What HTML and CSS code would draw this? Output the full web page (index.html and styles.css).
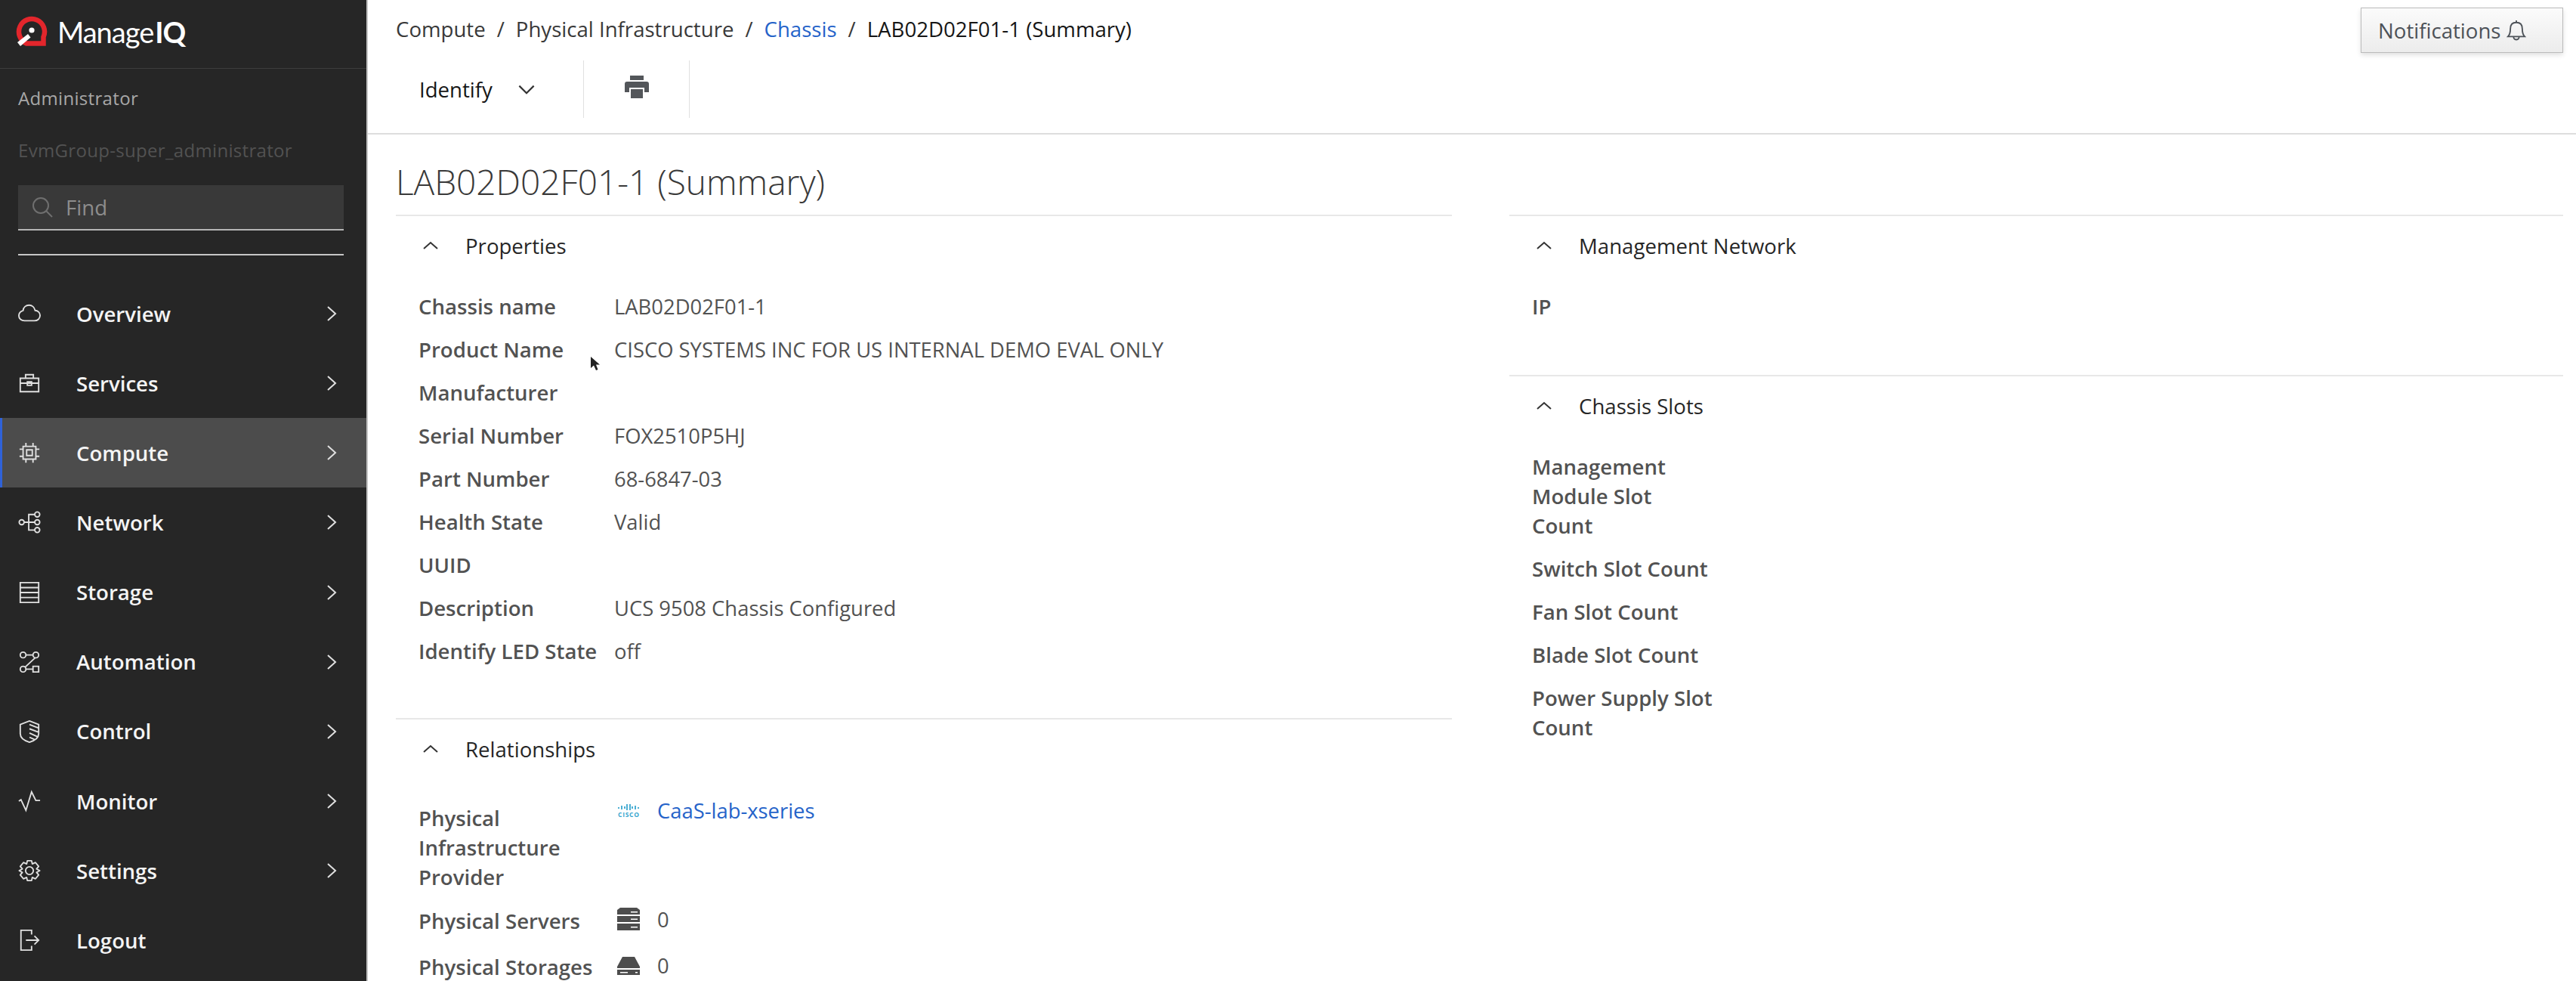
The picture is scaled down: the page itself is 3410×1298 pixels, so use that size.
FILE: index.html
```html
<!DOCTYPE html>
<html>

<head>
  <meta charset="utf-8" />
  <title>ManageIQ: Chassis</title>
  <link rel="stylesheet" href="styles.css">
</head>

<body>
  <div class="sidebar">
    <div class="brand">
      <svg class="brand-mark" viewBox="0 0 42 42">
        <path d="M30 36.500H14A17 17 0 1 1 36.500 28V36.500Z" fill="none" stroke="#e3262c" stroke-width="6.500" />
        <circle cx="21" cy="19" r="3.600" fill="#fff" />
        <path d="M2 35L16 24L19.500 28.500L6 40Z" fill="#fff" />
      </svg>
      <span class="brand-name">Manage<b>IQ</b></span>
    </div>
    <div class="user">Administrator</div>
    <div class="group">EvmGroup-super_administrator</div>
    <div class="find">
      <svg viewBox="0 0 28 28" class="find-icon">
        <circle cx="12" cy="12" r="10" />
        <path d="M19 19L27 27" />
      </svg>
      <span>Find</span>
    </div>
    <div class="side-line"></div>
    <div class="nav">
      <div class="nav-item">
        <svg class="nav-icon" viewBox="0 0 32 32"><path d="M9 26H23C27.500 26 31 23 31 18.500C31 14.500 27.500 11.500 24 11.500C23 7 19.500 4 15.500 4C11 4 7.500 7 7 11.500C3.500 12.500 1 15 1 19C1 23 4.500 26 9 26Z" /></svg>
        <span class="nav-label">Overview</span>
        <svg class="chev" viewBox="0 0 14 22"><path d="M2 2L12 11L2 20" /></svg>
      </div>
      <div class="nav-item">
        <svg class="nav-icon" viewBox="0 0 32 32"><path d="M3 9H29V28H3ZM3 16H29M10.500 9V4H21.500V9M13 14H19V19H13Z" /></svg>
        <span class="nav-label">Services</span>
        <svg class="chev" viewBox="0 0 14 22"><path d="M2 2L12 11L2 20" /></svg>
      </div>
      <div class="nav-item active">
        <svg class="nav-icon" viewBox="0 0 32 32"><path d="M7 7H25V25H7ZM12 12H20V20H12ZM11 2V7M21 2V7M11 25V30M21 25V30M2 11H7M2 21H7M25 11H30M25 21H30" /></svg>
        <span class="nav-label">Compute</span>
        <svg class="chev" viewBox="0 0 14 22"><path d="M2 2L12 11L2 20" /></svg>
      </div>
      <div class="nav-item">
        <svg class="nav-icon" viewBox="0 0 32 32"><circle cx="5" cy="16" r="3.500" /><circle cx="27" cy="5" r="3.500" /><circle cx="27" cy="16" r="3.500" /><circle cx="27" cy="27" r="3.500" /><path d="M8.500 16H23.500M23.500 5H15V27H23.500" /></svg>
        <span class="nav-label">Network</span>
        <svg class="chev" viewBox="0 0 14 22"><path d="M2 2L12 11L2 20" /></svg>
      </div>
      <div class="nav-item">
        <svg class="nav-icon" viewBox="0 0 32 32"><path d="M3 2H29V30H3ZM3 9H29M3 16H29M3 23H29" /></svg>
        <span class="nav-label">Storage</span>
        <svg class="chev" viewBox="0 0 14 22"><path d="M2 2L12 11L2 20" /></svg>
      </div>
      <div class="nav-item">
        <svg class="nav-icon" viewBox="0 0 32 32"><circle cx="7" cy="6" r="4" /><circle cx="25" cy="6" r="4" /><circle cx="7" cy="26" r="4" /><path d="M21 22H29V30H21ZM11 6H21M10 23L24 10M11 26H21" /></svg>
        <span class="nav-label">Automation</span>
        <svg class="chev" viewBox="0 0 14 22"><path d="M2 2L12 11L2 20" /></svg>
      </div>
      <div class="nav-item">
        <svg class="nav-icon" viewBox="0 0 32 32"><path d="M16 1L29 6V19C29 25 23 29 16 31C9 29 3 25 3 19V6ZM16 6L29 11M16 12L29 17M16 18L27 23M16 24L23 27" /></svg>
        <span class="nav-label">Control</span>
        <svg class="chev" viewBox="0 0 14 22"><path d="M2 2L12 11L2 20" /></svg>
      </div>
      <div class="nav-item">
        <svg class="nav-icon" viewBox="0 0 32 32"><path d="M1 16L4 14L11 29L19 3L25 15H31" /></svg>
        <span class="nav-label">Monitor</span>
        <svg class="chev" viewBox="0 0 14 22"><path d="M2 2L12 11L2 20" /></svg>
      </div>
      <div class="nav-item">
        <svg class="nav-icon" viewBox="0 0 32 32"><circle cx="16" cy="16" r="5.500" /><path d="M13 2H19L20 6.500L24.500 4.500L29 10L26 13.500L30.500 16L26 18.500L29 22L24.500 27.500L20 25.500L19 30H13L12 25.500L7.500 27.500L3 22L6 18.500L1.500 16L6 13.500L3 10L7.500 4.500L12 6.500Z" stroke-linejoin="round" /></svg>
        <span class="nav-label">Settings</span>
        <svg class="chev" viewBox="0 0 14 22"><path d="M2 2L12 11L2 20" /></svg>
      </div>
      <div class="nav-item">
        <svg class="nav-icon" viewBox="0 0 32 32"><path d="M19 8V2H4V30H19V24M11 16H29M23 10L29 16L23 22" /></svg>
        <span class="nav-label">Logout</span>
      </div>
    </div>
  </div>

  <div class="main">
    <div class="topbar">
      <div class="crumbs">
        <span>Compute</span><i>/</i>
        <span>Physical Infrastructure</span><i>/</i>
        <a>Chassis</a><i>/</i>
        <span class="crumb-now">LAB02D02F01-1 (Summary)</span>
      </div>
      <button class="notify" type="button">Notifications
        <svg viewBox="0 0 28 32"><path d="M2 25C5 22 5.500 19 5.500 14C5.500 8 9 5 14 5C19 5 22.500 8 22.500 14C22.500 19 23 22 26 25ZM10 25C10 31 18 31 18 25M14 2V5" /></svg>
      </button>
    </div>
    <div class="toolbar">
      <div class="tool tool-first">Identify
        <svg viewBox="0 0 26 16"><path d="M2 3L13 14L24 3" /></svg>
      </div>
      <div class="tool tool-print">
        <svg viewBox="0 0 32 30"><path d="M7 0H25V6H7ZM3 8H29C31 8 32 9 32 11V22H26V16H6V22H0V11C0 9 1 8 3 8ZM8 18H24V30H8Z" fill="#53565a" /></svg>
      </div>
    </div>

    <div class="content">
      <h1>LAB02D02F01-1 (Summary)</h1>
      <div class="cols">
        <div class="col">
          <div class="section props">
            <div class="section-head">
              <svg viewBox="0 0 20 12"><path d="M1 10L10 2L19 10" /></svg>Properties
            </div>
            <div class="row"><div class="lbl">Chassis name</div><div class="val">LAB02D02F01-1</div></div>
            <div class="row"><div class="lbl">Product Name</div><div class="val">CISCO SYSTEMS INC FOR US INTERNAL DEMO EVAL ONLY</div></div>
            <div class="row"><div class="lbl">Manufacturer</div><div class="val"></div></div>
            <div class="row"><div class="lbl">Serial Number</div><div class="val">FOX2510P5HJ</div></div>
            <div class="row"><div class="lbl">Part Number</div><div class="val">68-6847-03</div></div>
            <div class="row"><div class="lbl">Health State</div><div class="val">Valid</div></div>
            <div class="row"><div class="lbl">UUID</div><div class="val"></div></div>
            <div class="row"><div class="lbl">Description</div><div class="val">UCS 9508 Chassis Configured</div></div>
            <div class="row"><div class="lbl">Identify LED State</div><div class="val">off</div></div>
          </div>
          <div class="section">
            <div class="section-head">
              <svg viewBox="0 0 20 12"><path d="M1 10L10 2L19 10" /></svg>Relationships
            </div>
            <div class="row rel-first">
              <div class="lbl">Physical Infrastructure Provider</div>
              <div class="val">
                <svg class="cisco" viewBox="0 0 30 20">
                  <path d="M2 6V8M6 4V9M10 5V8M13 2V10M17 2V10M20 5V8M24 4V9M28 6V8" />
                  <text x="1" y="18.500" textLength="28">CISCO</text>
                </svg>
                <a>CaaS-lab-xseries</a>
              </div>
            </div>
            <div class="row rel">
              <div class="lbl">Physical Servers</div>
              <div class="val">
                <svg class="val-icon" viewBox="0 0 30 30"><path d="M4 0H26L30 3V9H0V3ZM0 11H30V19H0ZM0 21H30V30H0ZM18 5V6.500H27V5ZM18 14.500V16H27V14.500ZM18 25V26.500H27V25Z" fill="#4d4d4d" fill-rule="evenodd" /></svg>0
              </div>
            </div>
            <div class="row rel">
              <div class="lbl">Physical Storages</div>
              <div class="val">
                <svg class="val-icon" viewBox="0 0 30 30"><path d="M7 4H23L30 17V19H0V17ZM0 21H30V28H0ZM4 24V25.500H14V24ZM24 24V25.500H27V24Z" fill="#4d4d4d" fill-rule="evenodd" /></svg>0
              </div>
            </div>
          </div>
        </div>
        <div class="col">
          <div class="section">
            <div class="section-head">
              <svg viewBox="0 0 20 12"><path d="M1 10L10 2L19 10" /></svg>Management Network
            </div>
            <div class="row"><div class="lbl">IP</div><div class="val"></div></div>
          </div>
          <div class="section">
            <div class="section-head">
              <svg viewBox="0 0 20 12"><path d="M1 10L10 2L19 10" /></svg>Chassis Slots
            </div>
            <div class="row"><div class="lbl">Management Module Slot Count</div><div class="val"></div></div>
            <div class="row"><div class="lbl">Switch Slot Count</div><div class="val"></div></div>
            <div class="row"><div class="lbl">Fan Slot Count</div><div class="val"></div></div>
            <div class="row"><div class="lbl">Blade Slot Count</div><div class="val"></div></div>
            <div class="row"><div class="lbl">Power Supply Slot Count</div><div class="val"></div></div>
          </div>
        </div>
      </div>
    </div>
  </div>

  <!-- mouse pointer caught in the screenshot -->
  <svg class="pointer" viewBox="0 0 14 20"><path d="M1 1V16L5 12.500L8 19L10.500 18L8 11.500H13Z" fill="#222" /></svg>
</body>

</html>
```

FILE: styles.css
```css
html,
body {
  margin: 0;
  padding: 0;
  height: 100%;
}

body {
  display: flex;
  overflow: hidden;
  font-family: "Open Sans", sans-serif;
  font-size: 27.6px;
  line-height: 39px;
  background: #fff;
  color: #525252;
}

/* sidebar */
.sidebar {
  width: 485px;
  flex-shrink: 0;
  background: #262626;
  border-right: 2px solid #c4c4c4;
}

.brand {
  height: 90px;
  display: flex;
  align-items: center;
  padding-left: 21px;
  border-bottom: 1px solid #3d3d3d;
}

.brand-mark {
  width: 42px;
  height: 42px;
  margin-bottom: 6px;
}

.brand-name {
  margin: 0 0 6px 13px;
  font-family: "Lato", sans-serif;
  font-size: 38px;
  color: #fff;
  letter-spacing: -1px;
}

.brand-name b {
  margin-left: 2px;
  font-weight: 700;
}

.user,
.group {
  padding-left: 24px;
  font-size: 24px;
  line-height: 34px;
  letter-spacing: 0.32px;
}

.user {
  margin-top: 22px;
  color: #a8a8a8;
}

.group {
  margin-top: 35px;
  color: #525252;
}

.find {
  margin: 29px 30px 0 24px;
  height: 58px;
  display: flex;
  align-items: center;
  background: #393939;
  border-bottom: 2px solid #b5b5b5;
  color: #8d8d8d;
}

.find-icon {
  width: 28px;
  height: 28px;
  margin: 0 17px 0 18px;
  fill: none;
  stroke: #6f6f6f;
  stroke-width: 2;
}

.side-line {
  margin: 31px 30px 0 24px;
  height: 2px;
  background: #c6c6c6;
}

.nav {
  margin-top: 31px;
}

.nav-item {
  height: 92.15px;
  display: flex;
  align-items: center;
  padding-left: 24px;
  box-sizing: border-box;
  color: #f4f4f4;
  font-weight: 600;
}

.nav-item.active {
  background: #4c4c4c;
  border-left: 3px solid #2f62d8;
  padding-left: 21px;
}

.nav-icon {
  width: 30px;
  height: 30px;
  fill: none;
  stroke: #e0e0e0;
  stroke-width: 2;
}

.nav-label {
  margin-left: 47px;
  flex-grow: 1;
}

.chev {
  width: 14px;
  height: 22px;
  margin-right: 39px;
  fill: none;
  stroke: #e0e0e0;
  stroke-width: 2;
}

/* main area */
.main {
  flex-grow: 1;
  min-width: 0;
}

.topbar {
  height: 80px;
  padding: 10px 17px 0 37px;
  box-sizing: border-box;
  display: flex;
  justify-content: space-between;
  align-items: flex-start;
}

.crumbs {
  display: flex;
  padding-top: 9px;
  color: #393939;
}

.crumbs i {
  font-style: normal;
  margin: 0 15px;
}

.crumbs a {
  color: #2563c9;
}

.crumb-now {
  color: #161616;
}

.notify {
  width: 268px;
  height: 60px;
  padding: 0 0 0 22px;
  display: flex;
  align-items: center;
  background: linear-gradient(#fbfbfb, #ececec);
  border: 1px solid #bbb;
  box-shadow: 0 3px 6px rgba(0, 0, 0, 0.12);
  font-family: inherit;
  font-size: 27.6px;
  color: #4d5258;
}

.notify svg {
  width: 26px;
  height: 30px;
  margin-left: 8px;
  fill: none;
  stroke: #4d5258;
  stroke-width: 2;
}

.toolbar {
  height: 98px;
  box-sizing: border-box;
  padding: 0 0 20px 0;
  display: flex;
  border-bottom: 2px solid #ddd;
}

.tool {
  display: flex;
  align-items: center;
  border-right: 1px solid #e0e0e0;
}

.tool-first {
  width: 286px;
  padding-left: 68px;
  box-sizing: border-box;
  color: #161616;
}

.tool-first svg {
  width: 24px;
  height: 14px;
  margin-left: 33px;
  fill: none;
  stroke: #333;
  stroke-width: 2.500;
}

.tool-print {
  width: 139px;
  justify-content: center;
}

.tool-print svg {
  width: 32px;
  height: 30px;
  margin-top: -6px;
}

.content {
  padding: 0 17px 0 37px;
}

h1 {
  margin: 0;
  padding: 34px 0 15px;
  font-size: 46px;
  line-height: 57px;
  font-weight: 300;
  color: #393939;
}

.cols {
  display: grid;
  grid-template-columns: 1398px 1fr;
  column-gap: 76px;
}

.section {
  border-top: 2px solid #e8e8e8;
  padding-bottom: 61px;
}

.props {
  padding-bottom: 59px;
}

.section-head {
  height: 78px;
  display: flex;
  align-items: center;
  margin-bottom: 14px;
  color: #262626;
}

.section-head svg {
  width: 20px;
  height: 12px;
  margin: 0 36px;
  fill: none;
  stroke: #333;
  stroke-width: 2;
}

.row {
  display: flex;
}

.lbl {
  width: 244px;
  flex-shrink: 0;
  padding: 8px 15px 10px 30px;
  font-weight: 600;
}

.val {
  padding: 8px 0 10px;
  display: flex;
  align-items: flex-start;
  font-size: 27.4px;
}

.rel-first .lbl {
  padding-top: 19px;
}

.rel-first .val {
  padding-top: 9px;
}

.rel .lbl {
  padding: 9px 15px 13px 30px;
}

.rel .val {
  padding-top: 7px;
}

.val a {
  color: #2563c9;
}

.cisco {
  width: 30px;
  height: 20px;
  margin: 9px 23px 0 4px;
  fill: none;
  stroke: #3aa7d0;
  stroke-width: 1.800;
}

.cisco text {
  font-family: "Open Sans", sans-serif;
  font-size: 8.500px;
  font-weight: 700;
  fill: #3aa7d0;
  stroke: none;
}

.val-icon {
  width: 30px;
  height: 30px;
  margin: 4px 23px 0 4px;
}

.pointer {
  position: absolute;
  left: 781px;
  top: 471px;
  width: 14px;
  height: 20px;
}
```
